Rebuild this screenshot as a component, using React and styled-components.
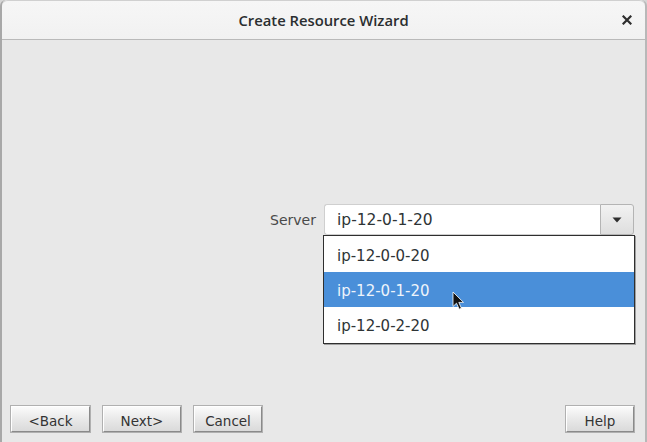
import React from "react";
import styled, { createGlobalStyle } from "styled-components";

const Global = createGlobalStyle`
  html, body { margin: 0; padding: 0; background: #d6d6d6; }
  body { width: 647px; height: 442px; overflow: hidden; }
  #root { height: 100%; }
`;

const Window = styled.div`
  box-sizing: border-box;
  height: 442px;
  width: 647px;
  display: flex;
  flex-direction: column;
  background: #e8e8e8;
  border-left: 2px solid #a8a8a8;
  border-right: 2px solid #b8b8b8;
  border-radius: 6px 6px 0 0;
  overflow: hidden;
`;

const TitleBar = styled.div`
  height: 38px;
  flex: none;
  position: relative;
  display: flex;
  align-items: center;
  justify-content: center;
  background: linear-gradient(#f6f6f6, #f1f1f1);
  border-top: 1px solid #d0d0d0;
  border-bottom: 1px solid #b9b9b9;
  border-radius: 6px 6px 0 0;
`;

const Title = styled.span`
  font-family: "Open Sans", "DejaVu Sans", sans-serif;
  font-weight: 600;
  font-size: 14.8px;
  color: #2a2e30;
`;

const CloseButton = styled.span`
  position: absolute;
  right: 11px;
  top: 12px;
  width: 14px;
  height: 14px;
  display: flex;
  align-items: center;
  justify-content: center;
`;

const Body = styled.div`
  flex: 1;
  display: flex;
  flex-direction: column;
`;

const FormArea = styled.div`
  flex: 1;
  display: flex;
  justify-content: flex-end;
  align-items: flex-start;
  padding: 164px 11px 0 0;
`;

const Row = styled.div`
  display: flex;
  align-items: center;
  gap: 8px;
`;

const Label = styled.span`
  font-family: "DejaVu Sans", sans-serif;
  font-size: 14px;
  color: #4a4a4a;
`;

const Combo = styled.div`
  position: relative;
  display: flex;
  width: 310px;
  height: 31px;
`;

const Field = styled.div`
  box-sizing: border-box;
  flex: 1;
  display: flex;
  align-items: center;
  padding-left: 12px;
  background: #ffffff;
  border: 1px solid #cfcfcf;
  border-right: none;
  border-radius: 3px 0 0 3px;
  font-family: "DejaVu Sans", sans-serif;
  font-size: 15.5px;
  color: #2e3436;
`;

const ArrowButton = styled.div`
  box-sizing: border-box;
  width: 34px;
  display: flex;
  align-items: center;
  justify-content: center;
  background: linear-gradient(#f2f2f2, #dedede);
  border: 1px solid #b4b4b4;
  border-radius: 0 3px 3px 0;
`;

const List = styled.div`
  position: absolute;
  left: -1px;
  top: 31px;
  width: 312px;
  box-sizing: border-box;
  background: #ffffff;
  border: 1px solid #2f2f2f;
  box-shadow: 1px 1px 0 #a0a0a0;
  padding: 1px 0;
  z-index: 5;
`;

const Item = styled.div`
  height: 35px;
  box-sizing: border-box;
  display: flex;
  align-items: center;
  padding: 2px 0 0 13px;
  font-family: "DejaVu Sans", sans-serif;
  font-size: 15px;
  background: ${(p) => (p.$selected ? "#4a8fd9" : "transparent")};
  color: ${(p) => (p.$selected ? "#eef4fb" : "#2e3436")};
`;

const Cursor = styled.svg`
  position: absolute;
  left: 128px;
  top: 87px;
  z-index: 6;
`;

const ButtonBar = styled.div`
  display: flex;
  align-items: center;
  gap: 13px;
  padding: 0 11px 10px 9px;
`;

const Spacer = styled.div`
  flex: 1;
`;

const Button = styled.button`
  box-sizing: border-box;
  height: 26px;
  width: ${(p) => p.$w}px;
  padding: 3px 0 0;
  margin: 0;
  font-family: "DejaVu Sans", sans-serif;
  font-size: 13.5px;
  color: #333333;
  background: linear-gradient(#fbfbfb, #e9e9e9 50%, #dadada);
  border: 1px solid;
  border-color: #ffffff #8a8a8a #8a8a8a #ffffff;
  box-shadow: 0 0 0 1px #b0b0b0;
  border-radius: 0;
`;

const items = ["ip-12-0-0-20", "ip-12-0-1-20", "ip-12-0-2-20"];

export default function App() {
  return (
    <>
      <Global />
      <Window>
        <TitleBar>
          <Title>Create Resource Wizard</Title>
          <CloseButton>
            <svg width="10" height="10" viewBox="0 0 10 10">
              <path d="M1.5 1.5 L8.5 8.5 M8.5 1.5 L1.5 8.5" stroke="#2e2e2e" strokeWidth="2.2" strokeLinecap="square" />
            </svg>
          </CloseButton>
        </TitleBar>
        <Body>
          <FormArea>
            <Row>
              <Label>Server</Label>
              <Combo>
                <Field>ip-12-0-1-20</Field>
                <ArrowButton>
                  <svg width="10" height="6" viewBox="0 0 10 6">
                    <path d="M0.5 0.5 H9.5 L5 5.5 Z" fill="#2e2e2e" />
                  </svg>
                </ArrowButton>
                <List>
                  {items.map((t, i) => (
                    <Item key={t} $selected={i === 1}>{t}</Item>
                  ))}
                </List>
                <Cursor width="13" height="20" viewBox="0 0 13 20">
                  <path d="M1 1 L1 15.5 L4.5 12.2 L7.2 18.2 L9.4 17.2 L6.8 11.4 L11.5 11.4 Z" fill="#111" stroke="#ffffff" strokeWidth="0.8" />
                </Cursor>
              </Combo>
            </Row>
          </FormArea>
          <ButtonBar>
            <Button $w={79}>&lt;Back</Button>
            <Button $w={78}>Next&gt;</Button>
            <Button $w={68}>Cancel</Button>
            <Spacer />
            <Button $w={68}>Help</Button>
          </ButtonBar>
        </Body>
      </Window>
    </>
  );
}
